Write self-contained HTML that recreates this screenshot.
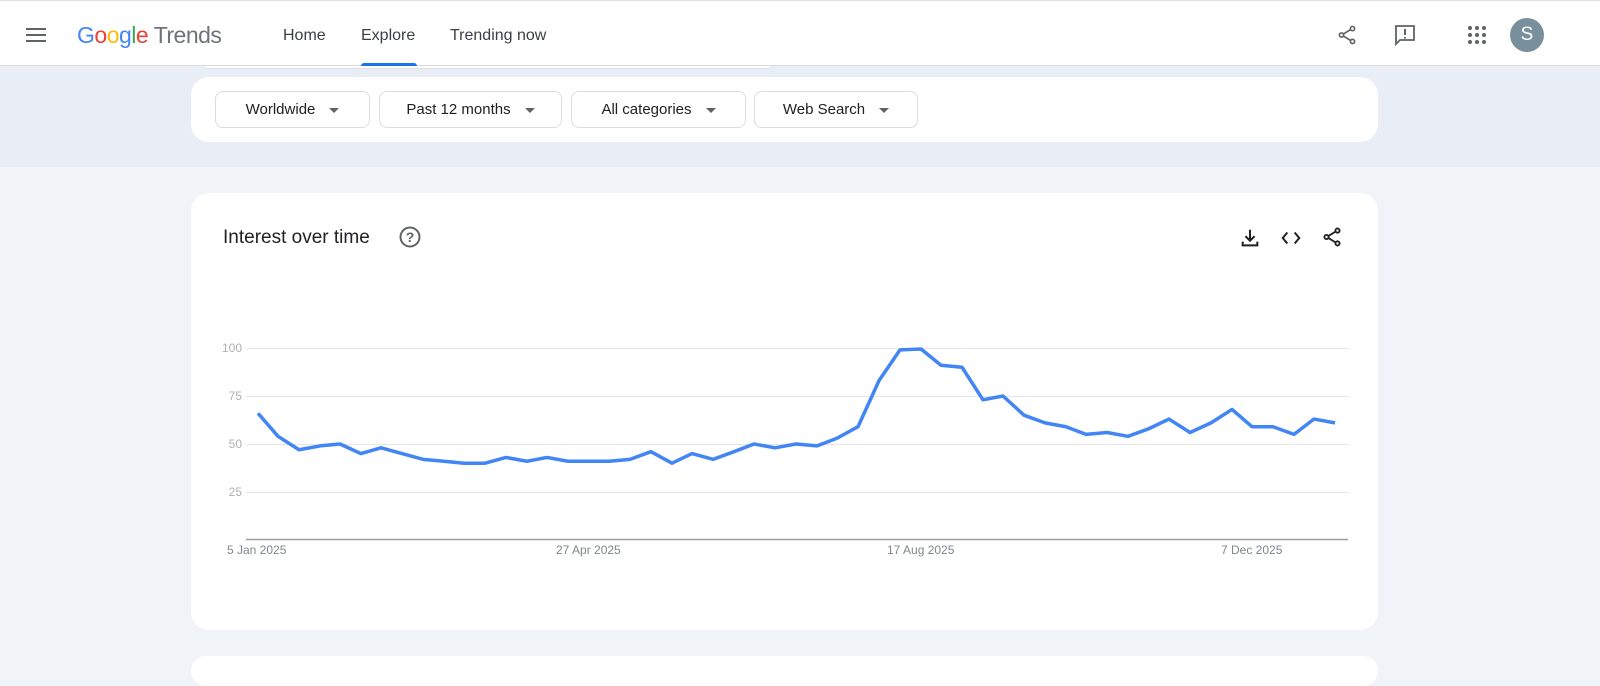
<!DOCTYPE html>
<html><head><style>
*{margin:0;padding:0;box-sizing:border-box}
body{width:1600px;height:673px;overflow:hidden;background:#f0f3f8;font-family:"Liberation Sans",Arial,sans-serif;position:relative}
.hdr{position:absolute;left:0;top:0;width:1600px;height:66px;background:#fff;border-top:1px solid #e0e0e0;border-bottom:1px solid #dadce0}
.band{position:absolute;left:0;top:66px;width:1600px;height:101px;background:#e8edf6}
.nav{position:absolute;top:26px;font-size:16px;color:#3c4043}
.card{position:absolute;left:191px;width:1187px;background:#fff;border-radius:18px}
.btn{position:absolute;top:14px;height:37px;border:1px solid #dadce0;border-radius:8px;font-size:15px;color:#202124;line-height:35px;text-align:center}
.btn i{display:inline-block;width:0;height:0;border-left:5px solid transparent;border-right:5px solid transparent;border-top:5px solid #5f6368;margin-left:14px;vertical-align:middle}
.yl{position:absolute;font-size:12px;color:#b0b0b0;text-align:right;width:40px}
.xl{position:absolute;top:543px;font-size:12px;color:#80868b}
</style></head><body>
<div class="hdr">
 <svg style="position:absolute;left:26px;top:26px" width="22" height="16"><rect y="1" width="20" height="2" fill="#5f6368"/><rect y="7" width="20" height="2" fill="#5f6368"/><rect y="13" width="20" height="2" fill="#5f6368"/></svg>
 <div style="position:absolute;left:77px;top:21px;font-size:23px;letter-spacing:-0.5px"><span style="color:#4285f4">G</span><span style="color:#ea4335">o</span><span style="color:#fbbc05">o</span><span style="color:#4285f4">g</span><span style="color:#34a853">l</span><span style="color:#ea4335">e</span> <span style="color:#6f7378">Trends</span></div>
 <div class="nav" style="left:283px">Home</div>
 <div class="nav" style="left:361px">Explore</div>
 <div style="position:absolute;left:361px;top:62px;width:56px;height:4px;background:#1a73e8;border-radius:3px 3px 0 0"></div>
 <div class="nav" style="left:450px">Trending now</div>
 <svg style="position:absolute;left:1336px;top:23px" width="22" height="22" viewBox="0 0 24 24" fill="none" stroke="#5f6368" stroke-width="1.8"><circle cx="18" cy="5" r="2.3"/><circle cx="6" cy="12" r="2.3"/><circle cx="18" cy="19" r="2.3"/><path d="M8 11 16 6M8 13 16 18"/></svg>
 <svg style="position:absolute;left:1393px;top:22px" width="24" height="24" viewBox="0 0 24 24" fill="none" stroke="#5f6368" stroke-width="1.8"><path d="M3 3h18v14H7l-4 4z"/><path d="M12 6v6M12 14v1.5" stroke-width="2"/></svg>
 <svg style="position:absolute;left:1467px;top:24px" width="20" height="20" fill="#5f6368"><circle cx="3" cy="3" r="2"/><circle cx="10" cy="3" r="2"/><circle cx="17" cy="3" r="2"/><circle cx="3" cy="10" r="2"/><circle cx="10" cy="10" r="2"/><circle cx="17" cy="10" r="2"/><circle cx="3" cy="17" r="2"/><circle cx="10" cy="17" r="2"/><circle cx="17" cy="17" r="2"/></svg>
 <div style="position:absolute;left:1510px;top:17px;width:34px;height:34px;border-radius:50%;background:#78909c;color:#fff;font-size:19px;text-align:center;line-height:34px">S</div>
</div>
<div class="band"></div>
<div style="position:absolute;left:205px;top:66px;width:565px;height:3px;background:#fff;border-bottom:1px solid #e0e0e0;border-radius:0 0 4px 4px"></div>
<div class="card" style="top:77px;height:65px">
 <div class="btn" style="left:24px;width:155px">Worldwide<i></i></div>
 <div class="btn" style="left:188px;width:183px">Past 12 months<i></i></div>
 <div class="btn" style="left:380px;width:175px">All categories<i></i></div>
 <div class="btn" style="left:563px;width:164px">Web Search<i></i></div>
</div>
<div class="card" style="top:193px;height:437px"></div>
<div class="card" style="top:656px;height:30px"></div>
<div style="position:absolute;left:223px;top:227px;font-size:19px;color:#202124">Interest over time</div>
<svg style="position:absolute;left:398px;top:225px" width="24" height="24" viewBox="0 0 24 24"><circle cx="12" cy="12" r="9.5" fill="none" stroke="#5f6368" stroke-width="2"/><text x="12" y="17" text-anchor="middle" font-size="14" font-family="Liberation Sans" font-weight="bold" fill="#5f6368">?</text></svg>
<svg style="position:absolute;left:1239px;top:227px" width="22" height="22" viewBox="0 0 24 24" fill="none" stroke="#202124" stroke-width="2.2"><path d="M12 3v12M7 10l5 5 5-5M4 16v4h16v-4"/></svg>
<svg style="position:absolute;left:1280px;top:227px" width="22" height="22" viewBox="0 0 24 24" fill="none" stroke="#202124" stroke-width="2.2"><path d="M8 6 3 12l5 6M16 6l5 6-5 6"/></svg>
<svg style="position:absolute;left:1321px;top:226px" width="22" height="22" viewBox="0 0 24 24" fill="none" stroke="#202124" stroke-width="2"><circle cx="18" cy="5" r="2.3"/><circle cx="6" cy="12" r="2.3"/><circle cx="18" cy="19" r="2.3"/><path d="M8 11 16 6M8 13 16 18"/></svg>
<div class="yl" style="left:202px;top:341px">100</div>
<div class="yl" style="left:202px;top:389px">75</div>
<div class="yl" style="left:202px;top:437px">50</div>
<div class="yl" style="left:202px;top:485px">25</div>
<div class="xl" style="left:227px">5 Jan 2025</div>
<div class="xl" style="left:556px">27 Apr 2025</div>
<div class="xl" style="left:887px">17 Aug 2025</div>
<div class="xl" style="left:1221px">7 Dec 2025</div>
<svg style="position:absolute;left:0;top:0" width="1600" height="673">
 <g stroke="#e6e6e6" stroke-width="1"><path d="M246 348.5H1348M246 396.5H1348M246 444.5H1348M246 492.5H1348"/></g>
 <path d="M246 539.5H1348" stroke="#9e9e9e" stroke-width="1.5"/>
 <g transform="matrix(1 0 0 -1.92 0 540)"><polyline fill="none" stroke="#4285f4" stroke-width="3.5" vector-effect="non-scaling-stroke" stroke-linejoin="round" points="258,66 278,54 299,47 320,49 340,50 361,45 381,48 402,45 423,42 444,41 464,40 485,40 506,43 527,41 547,43 568,41 589,41 609,41 630,42 651,46 672,40 692,45 713,42 734,46 754,50 775,48 796,50 817,49 837,53 858,59 879,83 900,99 921,99.5 941,91 962,90 983,73 1003,75 1024,65 1045,61 1066,59 1086,55 1107,56 1128,54 1149,58 1169,63 1190,56 1211,61 1232,68 1252,59 1273,59 1294,55 1314,63 1335,61"/></g>
</svg>
</body></html>
